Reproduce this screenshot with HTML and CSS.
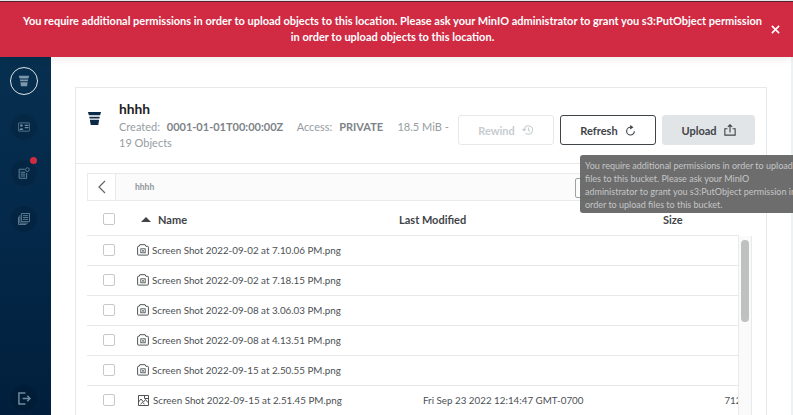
FILE: index.html
```html
<!DOCTYPE html>
<html lang="en">
<head>
<meta charset="utf-8">
<title>hhhh</title>
<link rel="stylesheet" href="styles.css">
</head>
<body>
<div class="app">
  <div class="topline"></div>
  <div class="banner">
    <p class="banner-text">You require additional permissions in order to upload objects to this location. Please ask your MinIO administrator to grant you s3:PutObject permission in order to upload objects to this location.</p>
    <svg class="banner-close" viewBox="0 0 10 10"><path d="M1 1l8 8M9 1l-8 8"/></svg>
  </div>
  <div class="shell">
    <nav class="sidebar">
      <div class="nav-top">
        <div class="nav-item nav-active">
          <svg viewBox="0 0 16 14" class="nav-svg"><path d="M1 0h14l-1.200 3.600H2.200zM2.500 5h11l-.4 2.400H2.900zM3.100 8.800h9.800L12 14H4z" fill="#7e97aa"/></svg>
        </div>
        <div class="nav-item">
          <svg viewBox="0 0 16 12" class="nav-svg"><rect x=".5" y=".5" width="15" height="11" rx="1" fill="none" stroke="#6f8ba0"/><circle cx="4.500" cy="4" r="1.800" fill="#6f8ba0"/><path d="M2 10c0-3 5-3 5 0zM9 3h5v1.500H9zM9 6h5v1.500H9z" fill="#6f8ba0"/></svg>
        </div>
        <div class="nav-item nav-badged">
          <svg viewBox="0 0 16 16" class="nav-svg"><path d="M9 3H1.500v12h10V8M3.500 7h6M3.500 9.500h6M3.500 12h6" fill="none" stroke="#6f8ba0" stroke-width="1.200"/><circle cx="12.500" cy="3.500" r="2.500" fill="none" stroke="#6f8ba0"/></svg>
          <span class="badge"></span>
        </div>
        <div class="nav-item">
          <svg viewBox="0 0 16 16" class="nav-svg"><path d="M4.500.7h10.800v10.800H4.500zM6.500 3.500h7M6.500 6h7M6.500 8.500h7M2.500 3v10.500H13M.7 5v10.300H11" fill="none" stroke="#6f8ba0" stroke-width="1.100"/></svg>
        </div>
      </div>
      <div class="nav-item">
        <svg viewBox="0 0 14 14" class="nav-logout"><path d="M8 1H1v12h7M5 7h8M10 4l3 3-3 3" fill="none" stroke="#6f8ba0" stroke-width="1.600"/></svg>
      </div>
    </nav>
    <main class="main">
      <section class="card">
        <header class="card-head">
          <svg class="bucket" viewBox="0 0 16 14"><path d="M1 0h14l-1 3.600H2zM2.400 5h11.200l-.4 2H2.800zM3 8.400h10L12 14H4z" fill="#0c2a47"/></svg>
          <div class="title-block">
            <h1 class="title">hhhh</h1>
            <div class="meta">
              <span class="meta-item">Created: <b>0001-01-01T00:00:00Z</b></span>
              <span class="meta-item">Access: <b>PRIVATE</b></span>
              <span class="meta-size">18.5 MiB -</span>
              <span class="meta-objects">19 Objects</span>
            </div>
          </div>
          <div class="actions">
            <button class="btn btn-disabled">Rewind
              <svg class="btn-icon" viewBox="0 0 14 14"><path d="M2.500 7a5 5 0 1 1 1.600 3.700M.6 5.600 2.500 7.800 4.600 5.800M7.500 4v3.300l2.200 1.300" fill="none" stroke="#c6ccd0" stroke-width="1.200"/></svg>
            </button>
            <button class="btn btn-outline">Refresh
              <svg class="btn-icon btn-icon-refresh" viewBox="0 0 12 12"><path d="M6 2.500A4.200 4.200 0 1 0 10.200 6.700" fill="none" stroke="#3f4448" stroke-width="1.200"/><path d="M5.600 0 9.300 2.500 5.600 5z" fill="#3f4448"/></svg>
            </button>
            <button class="btn btn-grey">Upload
              <svg class="btn-icon" viewBox="0 0 14 14"><path d="M4 5.500H1v7.500h12V5.500h-3M7 10V1M4.500 3.300 7 1l2.500 2.300" fill="none" stroke="#3f4448" stroke-width="1.300"/></svg>
            </button>
          </div>
        </header>
        <div class="body">
          <div class="crumbs">
            <span class="back"><svg viewBox="0 0 8 14" class="back-icon"><path d="M7 1 1 7l6 6" fill="none" stroke="#5f6468" stroke-width="1.200"/></svg></span>
            <span class="crumb-text">hhhh</span>
            <span class="crumb-btn"></span>
          </div>
          <div class="thead">
            <span class="cell-check"><span class="check"></span></span>
            <span class="cell-name th"><svg class="sort" viewBox="0 0 10 5"><path d="M0 5 5 0l5 5z"/></svg>Name</span>
            <span class="cell-date th">Last Modified</span>
            <span class="cell-size th">Size</span>
          </div>
          <div class="scroller">
            <div class="rows">
              <div class="row"><span class="cell-check"><span class="check"></span></span><span class="cell-name"><svg class="file" viewBox="0 0 12 12"><use href="#shot"/></svg>Screen Shot 2022-09-02 at 7.10.06 PM.png</span></div>
              <div class="row"><span class="cell-check"><span class="check"></span></span><span class="cell-name"><svg class="file" viewBox="0 0 12 12"><use href="#shot"/></svg>Screen Shot 2022-09-02 at 7.18.15 PM.png</span></div>
              <div class="row"><span class="cell-check"><span class="check"></span></span><span class="cell-name"><svg class="file" viewBox="0 0 12 12"><use href="#shot"/></svg>Screen Shot 2022-09-08 at 3.06.03 PM.png</span></div>
              <div class="row"><span class="cell-check"><span class="check"></span></span><span class="cell-name"><svg class="file" viewBox="0 0 12 12"><use href="#shot"/></svg>Screen Shot 2022-09-08 at 4.13.51 PM.png</span></div>
              <div class="row"><span class="cell-check"><span class="check"></span></span><span class="cell-name"><svg class="file" viewBox="0 0 12 12"><use href="#shot"/></svg>Screen Shot 2022-09-15 at 2.50.55 PM.png</span></div>
              <div class="row"><span class="cell-check"><span class="check"></span></span><span class="cell-name"><svg class="file file-img" viewBox="0 0 11 11"><path d="M.5.500h10v10H.5zM.5 7l2.500-3 2.500 3 2-2.500 2.500 3M2.500 9l2-1.500 2 1.500M6.500 1v2.500H10" fill="none" stroke="#3c4144" stroke-width=".9"/></svg>Screen Shot 2022-09-15 at 2.51.45 PM.png</span><span class="cell-date">Fri Sep 23 2022 12:14:47 GMT-0700</span><span class="cell-size cell-size-val">712</span></div>
            </div>
            <div class="track"><span class="thumb"></span></div>
          </div>
        </div>
      </section>
    </main>
  </div>
  <div class="tooltip">You require additional permissions in order to upload files to this bucket. Please ask your MinIO administrator to grant you s3:PutObject permission in order to upload files to this bucket.</div>
  <svg class="defs" width="0" height="0"><defs><g id="shot"><path d="M.6 3.200c0-.6.3-.9.9-.9h.6l.8-1.600h5.200l.8 1.600h1.600c.6 0 .9.300.9.900v7c0 .6-.3.900-.9.900H1.500c-.6 0-.9-.3-.9-.9z" fill="none" stroke="#3c4144" stroke-width=".9"/><rect x="3.800" y="4.800" width="4.400" height="4" fill="none" stroke="#3c4144" stroke-width=".8"/><path d="M5 5.800l2 2M7 5.800l-2 2" stroke="#3c4144" stroke-width=".7"/></g></defs></svg>
</div>
</body>
</html>
```
FILE: styles.css
```css
* { box-sizing: border-box; }
html, body { margin: 0; padding: 0; }
body { font-family: Lato, "Open Sans", sans-serif; color: #3f4448; background: #fff; }
.app { position: relative; width: 793px; height: 415px; overflow: hidden; display: flex; flex-direction: column; }
.defs { position: absolute; }

.topline { height: 2px; flex: none; background: linear-gradient(#e9ecee 50%, #5a2030 50%); }
.banner { height: 55px; flex: none; background: #d12a43; color: #fff; display: flex; align-items: center; position: relative; z-index: 2; box-shadow: 0 2px 8px rgba(0,0,0,.08); }
.banner-text { margin: 0 0 0 20px; width: 745px; flex: none; text-align: center; font-size: 11px; font-weight: 700; line-height: 16px; position: relative; top: -1px; }
.banner-close { width: 9px; height: 9px; fill: none; stroke: #fff; stroke-width: 1.800; margin-left: 6px; }

.shell { flex: 1; display: flex; min-height: 0; }
.sidebar { width: 51px; flex: none; background: linear-gradient(180deg, #072f4f 0%, #04294a 45%, #011f3c 100%); display: flex; flex-direction: column; justify-content: space-between; align-items: center; padding: 10px 3px 4px 0; }
.nav-top { display: flex; flex-direction: column; align-items: center; gap: 20px; }
.nav-item { width: 26px; height: 26px; border-radius: 50%; display: flex; align-items: center; justify-content: center; position: relative; background: rgba(0,0,0,.1); }
.nav-active { width: 28px; height: 28px; border: 1px solid #dfe6ea; background: transparent; margin-bottom: -1px; }
.nav-svg { width: 12px; height: 12px; }
.nav-logout { width: 13px; height: 13px; }
.badge { position: absolute; width: 7px; height: 7px; border-radius: 50%; background: #d12a43; top: -3px; right: 0; }

.main { flex: 1; min-width: 0; padding: 30px 24px 0; border-right: 2px solid #eef1f2; }
.card { width: 692px; height: 340px; border: 1px solid #e5e9eb; border-bottom: 0; }
.card-head { height: 76px; display: flex; align-items: flex-start; padding: 0 11px; border-bottom: 1px solid #e5e9eb; }
.bucket { width: 15px; height: 15px; margin-top: 23px; flex: none; }
.title-block { width: 331px; margin-left: 17px; padding-top: 11px; flex: none; }
.title { margin: 0; font-size: 13.800px; line-height: 20px; font-weight: 700; color: #1d2124; }
.meta { font-size: 11px; line-height: 16px; color: #969ca1; }
.meta b { color: #7d8388; margin-left: 4px; }
.meta-item { margin-right: 11px; }
.meta-size { margin-left: .5px; }
.meta-objects { display: block; }

.actions { display: flex; gap: 6px; margin-left: 8px; padding-top: 27px; flex: none; }
.btn { height: 30px; width: 96px; border-radius: 3px; background: #fff; border: 1px solid #e5e9eb; font: 700 11px Lato, sans-serif; color: #3f4448; display: flex; align-items: center; justify-content: center; gap: 7px; padding: 0; }
.btn-disabled { color: #c6ccd0; font-weight: 700; }
.btn-outline { border-color: #3f4448; }
.btn-grey { width: 93px; background: #e2e5e7; border-color: #e2e5e7; }
.btn-icon { width: 12px; height: 12px; }
.btn-icon-refresh { width: 11px; height: 11px; }

.body { padding: 9px 0 0 11px; }
.crumbs { height: 28px; width: 654px; border: 1px solid #e8ebed; background: #fbfbfb; display: flex; align-items: center; position: relative; }
.back { width: 28px; height: 26px; background: #fff; border-right: 1px solid #e8ebed; display: flex; align-items: center; justify-content: center; }
.back-icon { width: 8px; height: 14px; }
.crumb-text { margin-left: 19px; font-size: 8.500px; font-weight: 700; color: #8f9498; }
.crumb-btn { position: absolute; left: 487px; top: 4px; width: 20px; height: 20px; border: 1px solid #9aa0a4; border-radius: 2px; }

.thead { height: 33px; width: 652px; margin-top: 2px; display: flex; align-items: center; font-size: 11px; border-bottom: 1px solid #e5e9eb; }
.th { font-weight: 700; color: #3f4448; }
.cell-check { width: 43px; flex: none; padding-left: 16px; display: flex; }
.check { width: 12px; height: 12px; border: 1px solid #c6c9cb; border-radius: 2px; background: #fff; display: block; }
.cell-name { width: 269px; flex: none; display: flex; align-items: center; font-size: 9.800px; color: #4b5054; padding-left: 7px; }
.thead .cell-name { font-size: 11px; color: #3f4448; padding-left: 11px; }
.cell-date { flex: none; font-size: 9.800px; color: #4b5054; }
.thead .cell-date { width: 264px; font-size: 11px; color: #3f4448; }
.row .cell-date { margin-left: 24px; }
.cell-size { flex: none; }
.cell-size-val { font-size: 9.800px; color: #4b5054; margin-left: 141px; }
.sort { width: 10px; height: 5px; margin-right: 7px; fill: #3f4448; }
.file { width: 12px; height: 12px; margin-right: 3px; flex: none; }
.file-img { width: 11px; height: 11px; margin-right: 4px; margin-left: 1px; }

.scroller { display: flex; width: 665px; }
.rows { width: 651px; flex: none; overflow: hidden; }
.row { height: 30px; padding-bottom: 1px; display: flex; align-items: center; border-bottom: 1px solid #e5e9eb; white-space: nowrap; }
.track { width: 14px; flex: none; height: 180px; background: #fafafa; border: solid #e8ebed; border-width: 0 1px 0 1px; padding: 4px 2px 0; }
.thumb { display: block; width: 8px; height: 82px; border-radius: 4px; background: #bfc0c0; }

.tooltip { position: absolute; left: 580px; top: 155px; width: 220px; height: 58px; padding: 4px 0 0 5px; border-radius: 3px 0 0 3px; background: rgba(97,97,97,.92); color: #c4c6c7; font-size: 9px; line-height: 13px; z-index: 3; }
```
